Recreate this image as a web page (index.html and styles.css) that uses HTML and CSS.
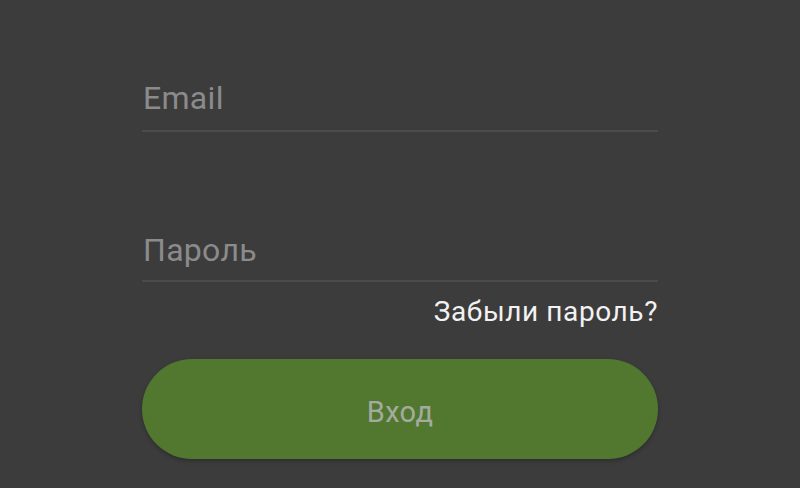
FILE: index.html
```html
<!DOCTYPE html>
<html lang="ru">
<head>
<meta charset="utf-8">
<link rel="stylesheet" href="styles.css">
</head>
<body>
<form class="login">
  <div class="field field-email"><span class="placeholder">Email</span></div>
  <div class="field field-pass"><span class="placeholder">Пароль</span></div>
  <div class="forgot">Забыли пароль?</div>
  <div class="btn">Вход</div>
</form>
</body>
</html>
```
FILE: styles.css
```css
html, body {
  margin: 0;
  padding: 0;
  background: #3c3c3c;
  height: 100%;
  overflow: hidden;
}
body {
  font-family: Roboto, "Noto Sans", sans-serif;
}
.login {
  width: 516px;
  margin: 0 auto;
  padding-top: 78px;
  display: flex;
  flex-direction: column;
}
.field {
  font-size: 32px;
  line-height: 40px;
  color: #8b8b8b;
  padding-bottom: 12px;
  border-bottom: 2px solid #4b4b4b;
  padding-left: 1px;
  letter-spacing: 0.3px;
}
.field-pass {
  margin-top: 98px;
  padding-bottom: 10px;
}
.forgot {
  margin-top: 15px;
  font-size: 28px;
  line-height: 30px;
  color: #f2f2f2;
  text-align: right;
  letter-spacing: 0.6px;
}
.btn {
  margin-top: 32px;
  height: 100px;
  border-radius: 50px;
  background: #52782f;
  color: #a3aba0;
  font-size: 29px;
  letter-spacing: 0.3px;
  display: flex;
  align-items: center;
  justify-content: center;
  padding-top: 5px;
  box-sizing: border-box;
  box-shadow: 0 2px 4px rgba(0,0,0,0.25);
}
```
